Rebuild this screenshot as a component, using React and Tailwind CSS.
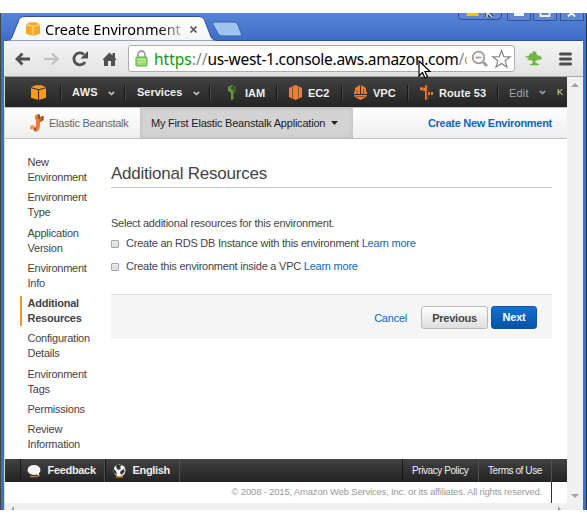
import React from "react";

const steps = [
  ["New", "Environment"],
  ["Environment", "Type"],
  ["Application", "Version"],
  ["Environment", "Info"],
  ["Additional", "Resources"],
  ["Configuration", "Details"],
  ["Environment", "Tags"],
  ["Permissions"],
  ["Review", "Information"],
];

function Cube({ size, fill, line }) {
  return (
    <svg width={size} height={size} viewBox="0 0 15 15" className="block shrink-0">
      <path d="M0 2.3 4.5 .3H10.500L15 2.300V12.700L7.500 15 0 12.700Z" fill={fill} />
      <path d="M0 2.800 7.500 4.800 15 2.800M7.500 4.800V15" fill="none" stroke={line} strokeWidth="1.100" />
    </svg>
  );
}

function Beanstalk() {
  return (
    <svg width="14" height="18" viewBox="0 0 14 18" className="block shrink-0">
      <path d="M5 1.500 8 0 10 1V12L9 16 6 18 4 17V14L6 13V6L5 5Z" fill="#e87f38" />
      <path d="M9.500 3 13.500 2V6L11 8H9.500Z" fill="#c8682f" />
      <path d="M0 12 2.500 11 5 12V16L0 15Z" fill="#ef9a62" />
      <path d="M8 0 10 1V5H8ZM11.500 2.500 13.500 2V6L11.500 7ZM4 14 6 13V16L4 17Z" fill="#95502a" />
    </svg>
  );
}

function Chevron({ className }) {
  return (
    <svg width="7" height="5" viewBox="0 0 7 5" className={"block shrink-0 " + className}>
      <path d="M.8 1 3.5 3.4 6.2 1" fill="none" stroke="currentColor" strokeWidth="1.7" />
    </svg>
  );
}

function Divider() {
  return <span className="h-[15px] w-[2px] shrink-0 border-l border-l-[#161616] bg-[#4b4b4b]" />;
}

function TabStrip() {
  return (
    <div className="relative h-[28px] shrink-0">
      <svg width="587" height="28" viewBox="0 0 587 28" className="absolute top-0 left-0">
        <defs>
          <linearGradient id="tab" x1="0" y1="0" x2="0" y2="1">
            <stop offset="0" stopColor="#ffffff" />
            <stop offset="1" stopColor="#f5f5f5" />
          </linearGradient>
        </defs>
        <path d="M5 28V27.4C9 27.2 11 27 12 24L19 6.5Q20.5 3.5 24 3.5H199Q203 3.5 204.5 7L211 24Q212.5 27.5 217 27.5H582V28Z" fill="url(#tab)" stroke="#29539f" strokeWidth="1" />
        <path d="M214 9H234Q236.500 9 237.500 11L241.500 21Q242 23 240 23H222Q219 23 218 20.500L213 11.500Q212 9 214 9Z" fill="#9fc3f1" stroke="#3560b1" />
        <g fill="#5f86cf" stroke="#2c539c">
          <path d="M458.500-2V3.500Q459 6.500 462 6.500H497Q501 6.500 501.500 3V-2Z" />
          <path d="M507.500-1V7.500H530.500V-1ZM533.500-1V7.500H556.500V-1ZM560.500-1V7.500H583.500V-1Z" />
        </g>
        <path d="M467 0H478L479 3H466Z" fill="#f9bd22" />
        <path d="M514 0H524V3H514Z" fill="#f1f4fb" />
        <path d="M540.500 0V3H549.500V0M568 3.500 571.500 0 575 3.500" fill="none" stroke="#f1f4fb" strokeWidth="1.800" />
        <path d="M487-1V4M488 0 492 4" fill="none" stroke="#2b3f66" strokeWidth="3.600" />
        <path d="M487-1V4M488 0 492 4" fill="none" stroke="#eee" strokeWidth="1.400" />
      </svg>
      <div className="relative flex h-[28px] items-center pt-[4px] pl-[26px]">
        <Cube size={14} fill="#f2ab22" line="#fbdc91" />
        <span className="ml-[5px] w-[138px] bg-gradient-to-r from-black from-80% to-[#cccccc] bg-clip-text font-['Noto_Sans',sans-serif] text-[14.5px] leading-[20px] whitespace-nowrap text-transparent">
          Create Environment
        </span>
        <svg width="9" height="9" viewBox="0 0 9 9" className="ml-[6px]">
          <path d="M1.500 1.500 7.500 7.500M7.500 1.500 1.500 7.500" stroke="#555" strokeWidth="1.700" />
        </svg>
      </div>
    </div>
  );
}

function Toolbar() {
  return (
    <div className="mx-[4px] flex h-[36px] shrink-0 items-center border-b border-[#a6a6a6] bg-gradient-to-b from-[#f5f5f5] to-[#e2e2e2] pl-[11px]">
      <svg width="104" height="18" viewBox="0 0 104 18" className="shrink-0">
        <path d="M15 9H2M7.500 3.500 2 9 7.500 14.500" fill="none" stroke="#505050" strokeWidth="2.800" />
        <path d="M29 9H42M37 3.500 42.500 9 37 14.500" fill="none" stroke="#c2c2c2" strokeWidth="2.400" />
        <path d="M70 12A6 6 0 1 1 69 4.500" fill="none" stroke="#505050" strokeWidth="2.800" />
        <path d="M73 1V8.500H65.500Z" fill="#505050" />
        <path d="M87.500 9.500 94.500 2.500 97.500 5.500V3H100V8L101.500 9.500 100 10.500V16H96V11H93V16H89V10.500Z" fill="#505050" />
      </svg>
      <div className="ml-[9px] flex h-[27px] w-[387px] shrink-0 items-center rounded-[3px] border border-[#adadad] bg-white pl-[6px]">
        <svg width="13" height="17" viewBox="0 0 13 17" className="shrink-0">
          <path d="M3 8V4.500A3.500 3.500 0 0 1 10 4.500V8" fill="none" stroke="#a0a0a0" strokeWidth="1.800" />
          <rect x="1" y="7" width="11" height="9" rx="1" fill="#9bdb75" stroke="#58a63a" />
          <path d="M2 9.500H11M2 12H11" stroke="#bdeba0" />
        </svg>
        <span className="ml-[6px] flex w-[314px] shrink-0 items-center font-['Noto_Sans',sans-serif] text-[15.5px] leading-[22px] whitespace-nowrap text-black">
          <span className="text-[#0b9a0b]">https</span>
          <span className="text-[#858585]">://</span>
          <span className="tracking-[-0.28px]">us-west-1.console.aws.amazon.com</span>
          <span className="text-[#858585]">/</span>
          <svg width="3" height="9" viewBox="0 0 3 9" className="mt-[4px]">
            <path d="M2.500 1Q.5 4.500 2.500 8" fill="none" stroke="#c58a4c" strokeWidth="1.200" />
          </svg>
        </span>
        <svg width="44" height="20" viewBox="0 0 44 20" className="ml-[3px] shrink-0">
          <circle cx="7.500" cy="8.500" r="5.800" fill="none" stroke="#9a9a9a" strokeWidth="1.700" />
          <path d="M4.500 8.500H10.500" stroke="#9a9a9a" strokeWidth="1.700" />
          <path d="M12 13 16 17" stroke="#9a9a9a" strokeWidth="2.800" />
          <path d="M30.500 1.500 32.800 7.600 39.200 7.800 34.200 11.800 36 18 30.500 14.400 25 18 26.800 11.800 21.800 7.800 28.200 7.600Z" fill="#fff" stroke="#858585" strokeWidth="1.200" />
        </svg>
      </div>
      <svg width="17" height="15" viewBox="0 0 17 15" className="ml-[10px] shrink-0">
        <path d="M0 6 3 4.500 4 5 5 2 7 3 8 0 11 1 12 4 16 5.500 17 8 13 9 10 10 11 12 14 13V14L10 14.500 4 14 8 12 7 9.500 2 9 4 7Z" fill="#71b543" />
      </svg>
      <svg width="13" height="14" viewBox="0 0 13 14" className="ml-[17px] shrink-0">
        <path d="M1.500 2H11.500M1.500 7H11.500M1.500 12H11.500" stroke="#4d4d4d" strokeWidth="3" strokeLinecap="round" />
      </svg>
    </div>
  );
}

function ServiceNav() {
  return (
    <nav className="flex h-[30px] shrink-0 items-center overflow-hidden bg-gradient-to-b from-[#424242] to-[#242424] pl-[26px] text-[11px] font-bold whitespace-nowrap text-[#eeeeee]">
      <span className="flex w-[29px]"><Cube size={15} fill="#ff9c0b" line="#303030" /></span>
      <Divider />
      <span className="ml-[10px] w-[36px] tracking-[0.3px]">AWS</span>
      <Chevron className="mt-[2px] mr-[9px] text-[#bbbbbb]" />
      <Divider />
      <span className="ml-[11px] w-[56px]">Services</span>
      <Chevron className="mt-[2px] mr-[9px] text-[#bbbbbb]" />
      <Divider />
      <svg width="8" height="15" viewBox="0 0 8 15" className="ml-[17px]">
        <path d="M0 2 4 0 8 2V6L6 8V14L3 15V8L0 6Z" fill="#6d9339" />
        <path d="M4 0 8 2V6L6 8V14L5 14V5H4Z" fill="#41632a" />
        <path d="M2.500 3H5" stroke="#29371d" strokeWidth="1.500" />
      </svg>
      <span className="ml-[9px] w-[31px] pt-[2px]">IAM</span>
      <Divider />
      <svg width="13" height="15" viewBox="0 0 13 15" className="ml-[11px]">
        <path d="M0 3 3 1.500 6.500 0 10 1.500 13 3V12L10 13.500 6.500 15 3 13.500 0 12Z" fill="#ef7d32" />
        <path d="M3.500 1V14M9.500 1V14" stroke="#9a4d23" />
      </svg>
      <span className="ml-[6px] w-[33px] pt-[2px]">EC2</span>
      <Divider />
      <svg width="13" height="15" viewBox="0 0 13 15" className="ml-[11px]">
        <path d="M1 3 6 0V9H0V7L1 6ZM7 0 12 3V6L13 7V9H7ZM0 10H13L12 12 6.500 15 1 12Z" fill="#ef7d32" />
        <path d="M3 5V9M9.500 4V9M2 11.500H11" stroke="#9a4d23" />
      </svg>
      <span className="ml-[6px] w-[34px] pt-[2px]">VPC</span>
      <Divider />
      <svg width="13" height="15" viewBox="0 0 13 15" className="ml-[11px]">
        <path d="M0 2 5 3V0L8 1V7H10V10H8V14L5 15V6L0 5ZM11 7H13V10H11Z" fill="#ef7d32" />
        <path d="M7 1 8 1.500V14L7 14.500ZM3 2.500V5.500" stroke="#9a4d23" strokeWidth=".8" />
      </svg>
      <span className="ml-[6px] w-[58px] pt-[2px] tracking-[0.1px]">Route 53</span>
      <Divider />
      <span className="ml-[10px] w-[30px] pt-[2px] font-normal tracking-[0.2px] text-[#a5a5a5]">Edit</span>
      <Chevron className="mt-[1px] text-[#999999]" />
      <span className="ml-[11px] pt-[2px] text-[9px] font-normal text-[#dddddd]">K</span>
    </nav>
  );
}

function AppNav() {
  return (
    <div className="flex h-[32px] shrink-0 items-center border-y border-[#bfbfbf] bg-gradient-to-b from-white to-[#eeeeee] text-[11px] tracking-[-0.25px] whitespace-nowrap">
      <div className="flex w-[135px] items-center pl-[25px] text-[#666666]">
        <Beanstalk />
        <span className="ml-[5px]">Elastic Beanstalk</span>
      </div>
      <div className="flex h-full w-[213px] items-center bg-[#d3d3d3] pl-[11px] text-[#222222] shadow-[inset_0_0_4px_#b9b9b9]">
        <span className="w-[180px] tracking-[-0.21px]">My First Elastic Beanstalk Application</span>
        <svg width="7" height="4" viewBox="0 0 7 4"><path d="M0 0H7L3.500 4Z" fill="#222" /></svg>
      </div>
      <span className="mr-[15px] ml-auto font-bold tracking-[-0.28px] text-[#1166bb]">Create New Environment</span>
    </div>
  );
}

function Option({ children, className }) {
  return (
    <label className={"flex h-[15px] items-center " + className}>
      <span className="mr-[7px] h-[8px] w-[8px] rounded-[1px] border border-[#a8a8a8] bg-gradient-to-b from-[#ededed] to-[#d9d9d9]" />
      {children}&nbsp;<a className="text-[#1166bb]">Learn more</a>
    </label>
  );
}

function Content() {
  return (
    <main className="flex h-[320px] shrink-0 text-[11px] tracking-[-0.235px] text-[#444444]">
      <ul className="flex w-[106px] shrink-0 flex-col gap-[5.25px] pt-[16px] pl-[15px] leading-[15px]">
        {steps.map((lines, i) => (
          <li key={i} className={i === 4 ? "border-l-2 border-[#ff9914] pl-[5.5px] font-bold" : "pl-[7.5px]"}>
            {lines.map((line) => <div key={line}>{line}</div>)}
          </li>
        ))}
      </ul>
      <section className="w-[441px] shrink-0 whitespace-nowrap">
        <h1 className="h-[49px] border-b border-[#c8c8c8] pt-[25px] text-[17px] leading-[20px]">Additional Resources</h1>
        <p className="mt-[28px] leading-[15px]">Select additional resources for this environment.</p>
        <Option className="mt-[5px]">Create an RDS DB Instance with this environment</Option>
        <Option className="mt-[8px]">Create this environment inside a VPC</Option>
        <div className="mt-[20px] flex h-[45px] items-center justify-end border-t border-[#dedede] bg-[#f5f5f5] pr-[15px]">
          <a className="mr-[14px] pt-[2px] text-[#1166bb]">Cancel</a>
          <button className="mr-[3px] h-[23px] w-[67px] rounded-[3px] border border-[#b9b9b9] bg-gradient-to-b from-white to-[#dddddd] pt-[2px] font-bold">Previous</button>
          <button className="h-[23px] w-[46px] rounded-[3px] border border-[#0a55a2] bg-gradient-to-b from-[#136fd0] to-[#0754a7] font-bold text-white">Next</button>
        </div>
      </section>
    </main>
  );
}

function Footer() {
  return (
    <footer className="relative shrink-0 whitespace-nowrap">
      <div className="flex h-[23px] items-center bg-gradient-to-b from-[#424242] to-[#232323] text-[11px] tracking-[-0.32px] text-[#eeeeee]">
        <div className="ml-[15px] flex h-full w-[85px] items-center border-r border-l border-r-[#505050] border-l-[#1a1a1a] pl-[6px] font-bold">
          <svg width="14" height="14" viewBox="0 0 14 14">
            <path d="M3 12.500H11" stroke="#c17a10" strokeWidth="1.500" />
            <ellipse cx="7" cy="6" rx="6.500" ry="5" fill="#f5f5f5" />
            <path d="M8 9 12.500 12.500 11.500 8Z" fill="#f5f5f5" />
          </svg>
          <span className="ml-[6.5px]">Feedback</span>
        </div>
        <div className="flex h-full w-[75px] items-center border-r border-l border-r-[#505050] border-l-[#1a1a1a] pl-[6px] font-bold">
          <svg width="14" height="14" viewBox="0 0 14 14">
            <path d="M4 13H11" stroke="#c17a10" strokeWidth="1.500" />
            <circle cx="7.500" cy="6.500" r="6" fill="#f5f5f5" />
            <path d="M1 4 4 7 5 11 2 9ZM5 1H10L8 3 9 5 6 6 4 3ZM10 6 12 5 12.500 8 9 11 8 8Z" fill="#333" />
          </svg>
          <span className="ml-[6.5px]">English</span>
        </div>
        <div className="ml-auto flex h-full items-center text-[10px] tracking-[-0.42px]">
          <span className="flex h-full w-[76px] items-center border-l border-[#181818] pl-[9px]">Privacy Policy</span>
          <span className="flex h-full w-[74px] items-center border-x border-[#505050] pl-[9px]">Terms of Use</span>
          <span className="w-[15px]" />
        </div>
      </div>
      <div className="mr-[15px] h-[21px] border-r border-[#333333] pr-[9px] text-right text-[9.5px] leading-[19px] tracking-[-0.19px] text-[#999999]">
        © 2008 - 2015, Amazon Web Services, Inc. or its affiliates. All rights reserved.
      </div>
    </footer>
  );
}

export default function App() {
  return (
    <div className="h-[523px] w-[587px] overflow-hidden bg-white pt-[13px] font-['Liberation_Sans',Arial,sans-serif]">
      <div className="relative flex h-[497px] flex-col overflow-hidden bg-[#416dc5]">
        <div className="absolute inset-x-0 top-0 h-[28px] bg-gradient-to-b from-[#5785d5] to-[#3f6cc7]" />
        <TabStrip />
        <Toolbar />
        <div className="mx-[4px] flex h-[433px] border-l border-[#d5d5d5]">
          <div className="flex w-[562px] shrink-0 flex-col bg-white">
            <ServiceNav />
            <AppNav />
            <Content />
            <Footer />
            <div className="flex h-[7px] shrink-0 items-end justify-between bg-[#f0f0f0] pr-[6px] pl-[6px]">
              <svg width="3" height="4" viewBox="0 0 3 4"><path d="M3 0V4H0Z" fill="#999" /></svg>
              <svg width="3" height="4" viewBox="0 0 3 4"><path d="M0 0V4H3Z" fill="#999" /></svg>
            </div>
          </div>
          <div className="flex flex-1 flex-col items-center justify-between bg-[#f0f0f0] pt-[6px] pb-[12px]">
            <svg width="8" height="4" viewBox="0 0 8 4"><path d="M0 4H8L4 0Z" fill="#a3a3a3" /></svg>
            <svg width="8" height="4" viewBox="0 0 8 4"><path d="M0 0H8L4 4Z" fill="#a3a3a3" /></svg>
          </div>
        </div>
        <span className="absolute inset-y-0 left-0 w-[1px] bg-[#444444]" />
        <span className="absolute inset-y-0 right-0 w-[1px] bg-[#333333]" />
        <svg width="14" height="20" viewBox="0 0 14 20" className="absolute top-[47px] left-[418px]">
          <path d="M1 1V16L4.500 12.500 7 18 9.500 17 7 11.500H12Z" fill="#fff" stroke="#000" strokeWidth="1.200" />
        </svg>
      </div>
    </div>
  );
}
